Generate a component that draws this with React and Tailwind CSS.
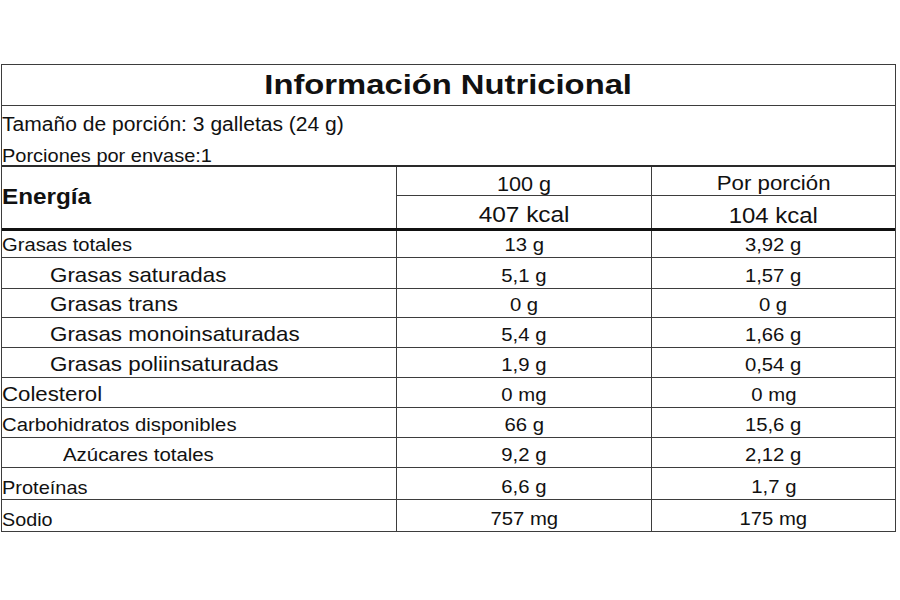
const rows = [
    { label: 'Grasas totales', a: '13 g', b: '3,92 g', h: 'h-[27px]', size: 'text-[18.7px]' },
    { label: 'Grasas saturadas', a: '5,1 g', b: '1,57 g', h: 'h-[31px]', size: 'text-[20.7px]', indent: 'pl-[48px]' },
    { label: 'Grasas trans', a: '0 g', b: '0 g', h: 'h-[29px]', size: 'text-[20.7px]', indent: 'pl-[48px]' },
    { label: 'Grasas monoinsaturadas', a: '5,4 g', b: '1,66 g', h: 'h-[30px]', size: 'text-[20.7px]', indent: 'pl-[48px]' },
    { label: 'Grasas poliinsaturadas', a: '1,9 g', b: '0,54 g', h: 'h-[30px]', size: 'text-[20.7px]', indent: 'pl-[48px]' },
    { label: 'Colesterol', a: '0 mg', b: '0 mg', h: 'h-[30px]', size: 'text-[20.6px]' },
    { label: 'Carbohidratos disponibles', a: '66 g', b: '15,6 g', h: 'h-[30px]', size: 'text-[18.8px]' },
    { label: 'Azúcares totales', a: '9,2 g', b: '2,12 g', h: 'h-[30px]', size: 'text-[18.9px]', indent: 'pl-[61px]' },
    { label: 'Proteínas', a: '6,6 g', b: '1,7 g', h: 'h-[32px]', size: 'text-[18.5px]' },
    { label: 'Sodio', a: '757 mg', b: '175 mg', h: 'h-[31px]', size: 'text-[18.3px]', last: true },
];

const stretch = 'inline-block scale-x-108';

export default function App() {
    return (
        <div className="w-[900px] h-[600px] bg-white font-['Liberation_Sans',Arial,sans-serif] text-[#111] overflow-hidden">
            <div className="ml-[1px] mt-[64px] w-[895px] border border-[#3d3d3d]">
                {/* Title */}
                <div className="h-[41px] border-b border-[#3d3d3d] flex items-center justify-center">
                    <span className="inline-block scale-x-117 text-[28px] font-bold leading-none">
                        Información Nutricional
                    </span>
                </div>

                {/* Serving info */}
                <div className="h-[61px] border-b-2 border-[#2a2a2a]">
                    <div className="h-[30px] flex items-end pb-[2px] leading-none">
                        <span className={`${stretch} origin-left text-[19.5px]`}>Tamaño de porción: 3 galletas (24 g)</span>
                    </div>
                    <div className="h-[29px] flex items-end pb-[0px] leading-none">
                        <span className={`${stretch} origin-left text-[18.5px]`}>Porciones por envase:1</span>
                    </div>
                </div>

                {/* Energy */}
                <div className="h-[64px] border-b-[3px] border-[#111] grid grid-cols-[394px_255px_1fr]">
                    <div className="flex items-center leading-none">
                        <span className={`${stretch} origin-left text-[22.5px] font-bold`}>Energía</span>
                    </div>
                    <div className="border-l border-[#3d3d3d] flex flex-col">
                        <div className="h-[29px] border-b border-[#3d3d3d] flex items-end justify-center pb-[1px] leading-none">
                            <span className={`${stretch} text-[20px]`}>100 g</span>
                        </div>
                        <div className="flex-1 flex items-end justify-center pb-[1px] leading-none">
                            <span className={`${stretch} text-[22.6px]`}>407 kcal</span>
                        </div>
                    </div>
                    <div className="border-l border-[#3d3d3d] flex flex-col">
                        <div className="h-[29px] border-b border-[#3d3d3d] flex items-end justify-center pb-[1px] leading-none">
                            <span className={`${stretch} text-[20.6px]`}>Por porción</span>
                        </div>
                        <div className="flex-1 flex items-end justify-center pb-[1px] leading-none">
                            <span className={`${stretch} text-[22.2px]`}>104 kcal</span>
                        </div>
                    </div>
                </div>

                {/* Nutrient rows */}
                {rows.map(r => (
                    <div
                        key={r.label}
                        className={`grid grid-cols-[394px_255px_1fr] ${r.h} ${r.last ? '' : 'border-b border-[#3d3d3d]'}`}
                    >
                        <div className={`flex items-end pb-[2px] leading-none ${r.indent || ''}`}>
                            <span className={`${stretch} origin-left ${r.size}`}>{r.label}</span>
                        </div>
                        <div className="border-l border-[#3d3d3d] flex items-end justify-center pb-[2px] leading-none">
                            <span className={`${stretch} text-[18.8px]`}>{r.a}</span>
                        </div>
                        <div className="border-l border-[#3d3d3d] flex items-end justify-center pb-[2px] leading-none">
                            <span className={`${stretch} text-[18.8px]`}>{r.b}</span>
                        </div>
                    </div>
                ))}
            </div>
        </div>
    );
}
